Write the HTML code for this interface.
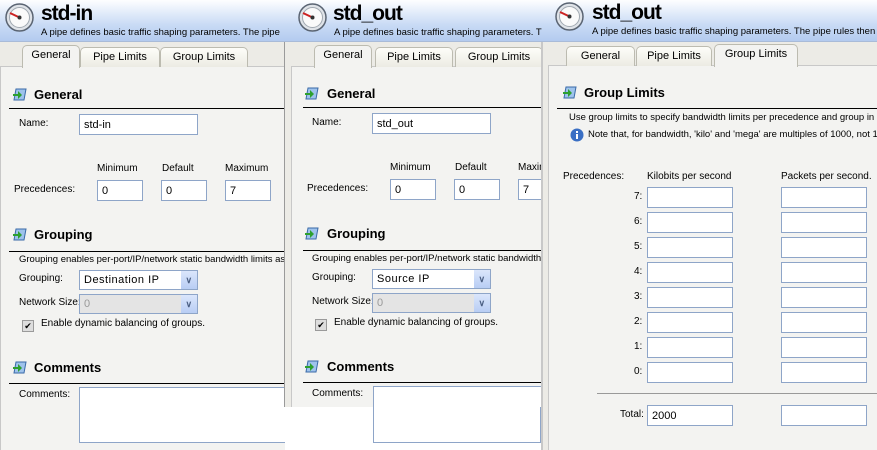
<!DOCTYPE html>
<html><head><meta charset="utf-8"><style>
*{margin:0;padding:0;box-sizing:border-box}
body{width:877px;height:450px;position:relative;overflow:hidden;background:#fff;font-family:"Liberation Sans",Arial,sans-serif;font-size:10px;color:#000}
.p{position:absolute;top:0;overflow:hidden;background:#ecebe6}
.a{position:absolute;white-space:nowrap}
.hd{position:absolute;left:0;top:0;right:0;height:42px;background:linear-gradient(#fdfeff,#c9dbf5 60%,#b3cbef);border-bottom:1px solid #a9bbd8}
.ttl{position:absolute;font:bold 21px "Liberation Sans",Arial,sans-serif;letter-spacing:-1px;top:2px;white-space:nowrap}
.sub{position:absolute;top:27px;font-size:9.5px;white-space:nowrap}
.pg{position:absolute;top:66px;bottom:0;background:#f3f3f1;border-left:1px solid #c8c8c8;border-top:1px solid #c8c8c8}
.tab{position:absolute;top:47px;height:20px;background:linear-gradient(#fdfdf9,#ecebe3);border:1px solid #bcbbb0;border-bottom:none;border-radius:5px 5px 0 0;text-align:center;line-height:19px;font-size:11px;white-space:nowrap}
.tab.on{background:#f3f3f1;top:45px;height:23px;z-index:2}
.h{position:absolute;font:bold 13px "Liberation Sans",Arial,sans-serif;white-space:nowrap}
.ln{position:absolute;height:1px;background:#000}
.ic{position:absolute;width:16px;height:14px}
.in{position:absolute;height:21px;background:#fff;border:1px solid #8ea5c8;padding:4px 0 0 4px;font-size:11px;white-space:nowrap}
.sel{position:absolute;height:20px;background:#fff;border:1px solid #8ea5c8;padding:3px 0 0 4px;font-size:11px;letter-spacing:.5px;white-space:nowrap}
.sel b{position:absolute;right:0;top:0;width:16px;height:18px;background:linear-gradient(#dbe6fb,#b8cdf4);color:#4d6185;font-size:9px;text-align:center;line-height:18px}
.cb{position:absolute;width:12px;height:12px;border:1px solid #9a9a9a;background:#ddd;font-size:9px;line-height:10px;text-align:center}
.s10{font-size:9.5px}
</style></head><body>

<!-- Panel 1 -->
<div class="p" style="left:0;width:285px;height:450px">
 <div class="hd"></div>
 <svg class="a" style="left:5px;top:3px" width="29" height="29" viewBox="0 0 29 29"><circle cx="14.5" cy="14.5" r="13.5" fill="#dfe3e8" stroke="#5a6472" stroke-width="1.5"/><circle cx="14.5" cy="14.5" r="10" fill="#fafafa" stroke="#a0a8b0"/><line x1="14.5" y1="14.5" x2="5" y2="10" stroke="#c22" stroke-width="2"/><circle cx="14.5" cy="14.5" r="2" fill="#333"/></svg>
 <div class="ttl" style="left:41px">std-in</div>
 <div class="sub" style="left:41px">A pipe defines basic traffic shaping parameters. The pipe</div>
 <div class="pg" style="left:0;right:0"></div>
 <div class="tab on" style="left:22px;width:58px">General</div>
 <div class="tab" style="left:80px;width:80px">Pipe Limits</div>
 <div class="tab" style="left:160px;width:88px">Group Limits</div>
 <svg class="ic" style="left:12px;top:87px" viewBox="0 0 16 14"><path d="M4 2h10l-2 11H2z" fill="#9fc3ec" stroke="#3a6aa8"/><path d="M1 7h5V4l4 4-4 4V9H1z" fill="#2ea02e"/></svg>
 <div class="h" style="left:34px;top:87px">General</div>
 <div class="ln" style="left:9px;top:108px;width:280px"></div>
 <div class="a" style="left:19px;top:118px">Name:</div>
 <div class="in" style="left:79px;top:114px;width:119px">std-in</div>
 <div class="a" style="left:97px;top:163px">Minimum</div>
 <div class="a" style="left:162px;top:163px">Default</div>
 <div class="a" style="left:225px;top:163px">Maximum</div>
 <div class="a" style="left:14px;top:184px">Precedences:</div>
 <div class="in" style="left:97px;top:180px;width:46px">0</div>
 <div class="in" style="left:161px;top:180px;width:46px">0</div>
 <div class="in" style="left:225px;top:180px;width:46px">7</div>
 <svg class="ic" style="left:12px;top:227px" viewBox="0 0 16 14"><path d="M4 2h10l-2 11H2z" fill="#9fc3ec" stroke="#3a6aa8"/><path d="M1 7h5V4l4 4-4 4V9H1z" fill="#2ea02e"/></svg>
 <div class="h" style="left:34px;top:227px">Grouping</div>
 <div class="ln" style="left:9px;top:251px;width:280px"></div>
 <div class="a s10" style="left:19px;top:254px">Grouping enables per-port/IP/network static bandwidth limits as d</div>
 <div class="a" style="left:19px;top:273px">Grouping:</div>
 <div class="sel" style="left:79px;top:270px;width:119px">Destination IP<b>&#8744;</b></div>
 <div class="a" style="left:19px;top:297px">Network Size:</div>
 <div class="sel" style="left:79px;top:294px;width:119px;background:#e4e4e4;color:#999">0<b>&#8744;</b></div>
 <div class="cb" style="left:22px;top:320px">&#10004;</div>
 <div class="a" style="left:41px;top:318px">Enable dynamic balancing of groups.</div>
 <svg class="ic" style="left:12px;top:360px" viewBox="0 0 16 14"><path d="M4 2h10l-2 11H2z" fill="#9fc3ec" stroke="#3a6aa8"/><path d="M1 7h5V4l4 4-4 4V9H1z" fill="#2ea02e"/></svg>
 <div class="h" style="left:34px;top:360px">Comments</div>
 <div class="ln" style="left:9px;top:383px;width:280px"></div>
 <div class="a" style="left:19px;top:389px">Comments:</div>
 <div class="in" style="left:79px;top:387px;width:230px;height:56px"></div>
</div>
<div class="a" style="left:284px;top:42px;width:1px;height:365px;background:#9a9a9a"></div>

<!-- Panel 2 -->
<div class="p" style="left:285px;width:258px;height:407px">
 <div class="hd"></div>
 <svg class="a" style="left:13px;top:3px" width="29" height="29" viewBox="0 0 29 29"><circle cx="14.5" cy="14.5" r="13.5" fill="#dfe3e8" stroke="#5a6472" stroke-width="1.5"/><circle cx="14.5" cy="14.5" r="10" fill="#fafafa" stroke="#a0a8b0"/><line x1="14.5" y1="14.5" x2="5" y2="10" stroke="#c22" stroke-width="2"/><circle cx="14.5" cy="14.5" r="2" fill="#333"/></svg>
 <div class="ttl" style="left:48px">std_out</div>
 <div class="sub" style="left:49px">A pipe defines basic traffic shaping parameters. T</div>
 <div class="pg" style="left:6px;right:0"></div>
 <div class="tab on" style="left:29px;width:58px">General</div>
 <div class="tab" style="left:90px;width:78px">Pipe Limits</div>
 <div class="tab" style="left:170px;width:88px">Group Limits</div>
 <svg class="ic" style="left:19px;top:86px" viewBox="0 0 16 14"><path d="M4 2h10l-2 11H2z" fill="#9fc3ec" stroke="#3a6aa8"/><path d="M1 7h5V4l4 4-4 4V9H1z" fill="#2ea02e"/></svg>
 <div class="h" style="left:42px;top:86px">General</div>
 <div class="ln" style="left:18px;top:107px;width:240px"></div>
 <div class="a" style="left:27px;top:117px">Name:</div>
 <div class="in" style="left:87px;top:113px;width:119px">std_out</div>
 <div class="a" style="left:105px;top:162px">Minimum</div>
 <div class="a" style="left:170px;top:162px">Default</div>
 <div class="a" style="left:233px;top:162px">Maximum</div>
 <div class="a" style="left:22px;top:183px">Precedences:</div>
 <div class="in" style="left:105px;top:179px;width:46px">0</div>
 <div class="in" style="left:169px;top:179px;width:46px">0</div>
 <div class="in" style="left:233px;top:179px;width:46px">7</div>
 <svg class="ic" style="left:19px;top:226px" viewBox="0 0 16 14"><path d="M4 2h10l-2 11H2z" fill="#9fc3ec" stroke="#3a6aa8"/><path d="M1 7h5V4l4 4-4 4V9H1z" fill="#2ea02e"/></svg>
 <div class="h" style="left:42px;top:226px">Grouping</div>
 <div class="ln" style="left:18px;top:250px;width:240px"></div>
 <div class="a s10" style="left:27px;top:253px">Grouping enables per-port/IP/network static bandwidth li</div>
 <div class="a" style="left:27px;top:272px">Grouping:</div>
 <div class="sel" style="left:87px;top:269px;width:119px">Source IP<b>&#8744;</b></div>
 <div class="a" style="left:27px;top:296px">Network Size:</div>
 <div class="sel" style="left:87px;top:293px;width:119px;background:#e4e4e4;color:#999">0<b>&#8744;</b></div>
 <div class="cb" style="left:30px;top:319px">&#10004;</div>
 <div class="a" style="left:49px;top:317px">Enable dynamic balancing of groups.</div>
 <svg class="ic" style="left:19px;top:359px" viewBox="0 0 16 14"><path d="M4 2h10l-2 11H2z" fill="#9fc3ec" stroke="#3a6aa8"/><path d="M1 7h5V4l4 4-4 4V9H1z" fill="#2ea02e"/></svg>
 <div class="h" style="left:42px;top:359px">Comments</div>
 <div class="ln" style="left:18px;top:382px;width:240px"></div>
 <div class="a" style="left:27px;top:388px">Comments:</div>
 <div class="in" style="left:88px;top:386px;width:170px;height:56px"></div>
</div>
<div class="in" style="left:373px;top:407px;width:168px;height:36px;border-top:none"></div>
<div class="a" style="left:541px;top:42px;width:2px;height:408px;background:#c8c8c8"></div>

<!-- Panel 3 -->
<div class="p" style="left:543px;width:334px;height:450px">
 <div class="hd"></div>
 <svg class="a" style="left:12px;top:2px" width="29" height="29" viewBox="0 0 29 29"><circle cx="14.5" cy="14.5" r="13.5" fill="#dfe3e8" stroke="#5a6472" stroke-width="1.5"/><circle cx="14.5" cy="14.5" r="10" fill="#fafafa" stroke="#a0a8b0"/><line x1="14.5" y1="14.5" x2="5" y2="10" stroke="#c22" stroke-width="2"/><circle cx="14.5" cy="14.5" r="2" fill="#333"/></svg>
 <div class="ttl" style="left:49px;top:1px">std_out</div>
 <div class="sub" style="left:49px;top:26px">A pipe defines basic traffic shaping parameters. The pipe rules then</div>
 <div class="pg" style="left:5px;right:0;top:65px"></div>
 <div class="tab" style="left:23px;width:69px;top:46px">General</div>
 <div class="tab" style="left:93px;width:76px;top:46px">Pipe Limits</div>
 <div class="tab on" style="left:171px;width:84px;top:44px">Group Limits</div>
 <svg class="ic" style="left:19px;top:85px" viewBox="0 0 16 14"><path d="M4 2h10l-2 11H2z" fill="#9fc3ec" stroke="#3a6aa8"/><path d="M1 7h5V4l4 4-4 4V9H1z" fill="#2ea02e"/></svg>
 <div class="h" style="left:41px;top:85px">Group Limits</div>
 <div class="ln" style="left:14px;top:108px;width:320px"></div>
 <div class="a s10" style="left:26px;top:112px">Use group limits to specify bandwidth limits per precedence and group in t</div>
 <svg class="a" style="left:27px;top:128px" width="14" height="14" viewBox="0 0 14 14"><circle cx="7" cy="7" r="6.5" fill="#3a6fc4"/><rect x="6" y="6" width="2" height="5" fill="#fff"/><rect x="6" y="3" width="2" height="2" fill="#fff"/></svg>
 <div class="a s10" style="left:45px;top:129px">Note that, for bandwidth, 'kilo' and 'mega' are multiples of 1000, not 1</div>
 <div class="a" style="left:20px;top:171px">Precedences:</div>
 <div class="a" style="left:104px;top:171px">Kilobits per second</div>
 <div class="a" style="left:238px;top:171px">Packets per second.</div>
 <div class="a" style="left:91px;top:191px">7:</div><div class="in" style="left:104px;top:187px;width:86px"></div><div class="in" style="left:238px;top:187px;width:86px"></div>
 <div class="a" style="left:91px;top:216px">6:</div><div class="in" style="left:104px;top:212px;width:86px"></div><div class="in" style="left:238px;top:212px;width:86px"></div>
 <div class="a" style="left:91px;top:241px">5:</div><div class="in" style="left:104px;top:237px;width:86px"></div><div class="in" style="left:238px;top:237px;width:86px"></div>
 <div class="a" style="left:91px;top:266px">4:</div><div class="in" style="left:104px;top:262px;width:86px"></div><div class="in" style="left:238px;top:262px;width:86px"></div>
 <div class="a" style="left:91px;top:291px">3:</div><div class="in" style="left:104px;top:287px;width:86px"></div><div class="in" style="left:238px;top:287px;width:86px"></div>
 <div class="a" style="left:91px;top:316px">2:</div><div class="in" style="left:104px;top:312px;width:86px"></div><div class="in" style="left:238px;top:312px;width:86px"></div>
 <div class="a" style="left:91px;top:341px">1:</div><div class="in" style="left:104px;top:337px;width:86px"></div><div class="in" style="left:238px;top:337px;width:86px"></div>
 <div class="a" style="left:91px;top:366px">0:</div><div class="in" style="left:104px;top:362px;width:86px"></div><div class="in" style="left:238px;top:362px;width:86px"></div>
 <div class="a" style="left:54px;top:393px;width:280px;height:1px;background:#999"></div>
 <div class="a" style="left:77px;top:409px">Total:</div><div class="in" style="left:104px;top:405px;width:86px">2000</div><div class="in" style="left:238px;top:405px;width:86px"></div>
</div>
</body></html>
